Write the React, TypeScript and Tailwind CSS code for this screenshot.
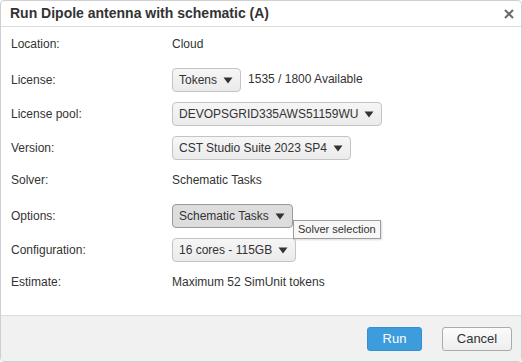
import React from "react";

const Caret = () => (
  <svg width="10" height="7" viewBox="0 0 10 7" className="shrink-0">
    <path d="M0.5 0.5 L9.5 0.5 L5 6.5 Z" fill="#333" />
  </svg>
);

const Select = ({ text, active }: { text: string; active?: boolean }) => (
  <div
    className={
      active
        ? "flex h-[24px] items-center gap-[6px] rounded-[4px] border border-[#9a9a9a] bg-[#dddddd] pl-[6px] pr-[7px]"
        : "flex h-[24px] items-center gap-[6px] rounded-[4px] border border-[#c4c4c4] bg-gradient-to-b from-[#f6f6f6] to-[#ebebeb] pl-[6px] pr-[7px]"
    }
  >
    <span>{text}</span>
    <Caret />
  </div>
);

const Row = ({ label, children, text }: { label: string; children: React.ReactNode; text?: boolean }) => (
  <div className={text ? "flex h-[34px] items-center pb-[4px]" : "flex h-[34px] items-center"}>
    <div className="w-[161px] shrink-0">{label}</div>
    <div className="flex items-center">{children}</div>
  </div>
);

export default function App() {
  return (
    <div
      className="h-[362px] w-[522px] bg-white text-[12px] text-[#333]"
      style={{ fontFamily: '"Liberation Sans", Arial, sans-serif' }}
    >
      <div className="flex h-full flex-col overflow-hidden rounded-[4px] border border-[#cfcfcf]">
        <div className="flex h-[26px] shrink-0 items-center justify-between border-b border-[#dedede] pl-[9px] pr-[7px]">
          <span className="text-[14px] font-bold text-[#333]">Run Dipole antenna with schematic (A)</span>
          <svg width="10" height="10" viewBox="0 0 10 10">
            <path d="M1 1 L9 9 M9 1 L1 9" stroke="#6b6b6b" strokeWidth="2" />
          </svg>
        </div>
        <div className="flex flex-1 flex-col pl-[10px] pt-[2px]">
          <Row label="Location:" text>
            <span>Cloud</span>
          </Row>
          <Row label="License:">
            <Select text="Tokens" />
            <span className="ml-[7px] -mt-[3px]">1535 / 1800 Available</span>
          </Row>
          <Row label="License pool:">
            <Select text="DEVOPSGRID335AWS51159WU" />
          </Row>
          <Row label="Version:">
            <Select text="CST Studio Suite 2023 SP4" />
          </Row>
          <Row label="Solver:" text>
            <span>Schematic Tasks</span>
          </Row>
          <Row label="Options:">
            <div className="relative">
              <Select text="Schematic Tasks" active />
              <div className="absolute left-[121px] top-[16px] z-10 flex h-[19px] items-center whitespace-nowrap border border-[#9c9c9c] bg-[#f7f7f7] px-[4px] text-[11px] text-[#333] shadow-[1px_1px_2px_rgba(0,0,0,0.15)]">
                Solver selection
              </div>
            </div>
          </Row>
          <Row label="Configuration:">
            <Select text="16 cores - 115GB" />
          </Row>
          <Row label="Estimate:" text>
            <span>Maximum 52 SimUnit tokens</span>
          </Row>
        </div>
        <div className="flex h-[46px] shrink-0 items-center justify-end gap-[20px] border-t border-[#dcdcdc] bg-[#f1f1f1] pr-[9px] text-[13px]">
          <button className="h-[24px] w-[55px] rounded-[3px] border border-[#3590cf] bg-[#3d9ddc] text-white">Run</button>
          <button className="h-[24px] w-[70px] rounded-[3px] border border-[#ababab] bg-gradient-to-b from-[#fbfbfb] to-[#eeeeee] text-[#333]">Cancel</button>
        </div>
      </div>
    </div>
  );
}
